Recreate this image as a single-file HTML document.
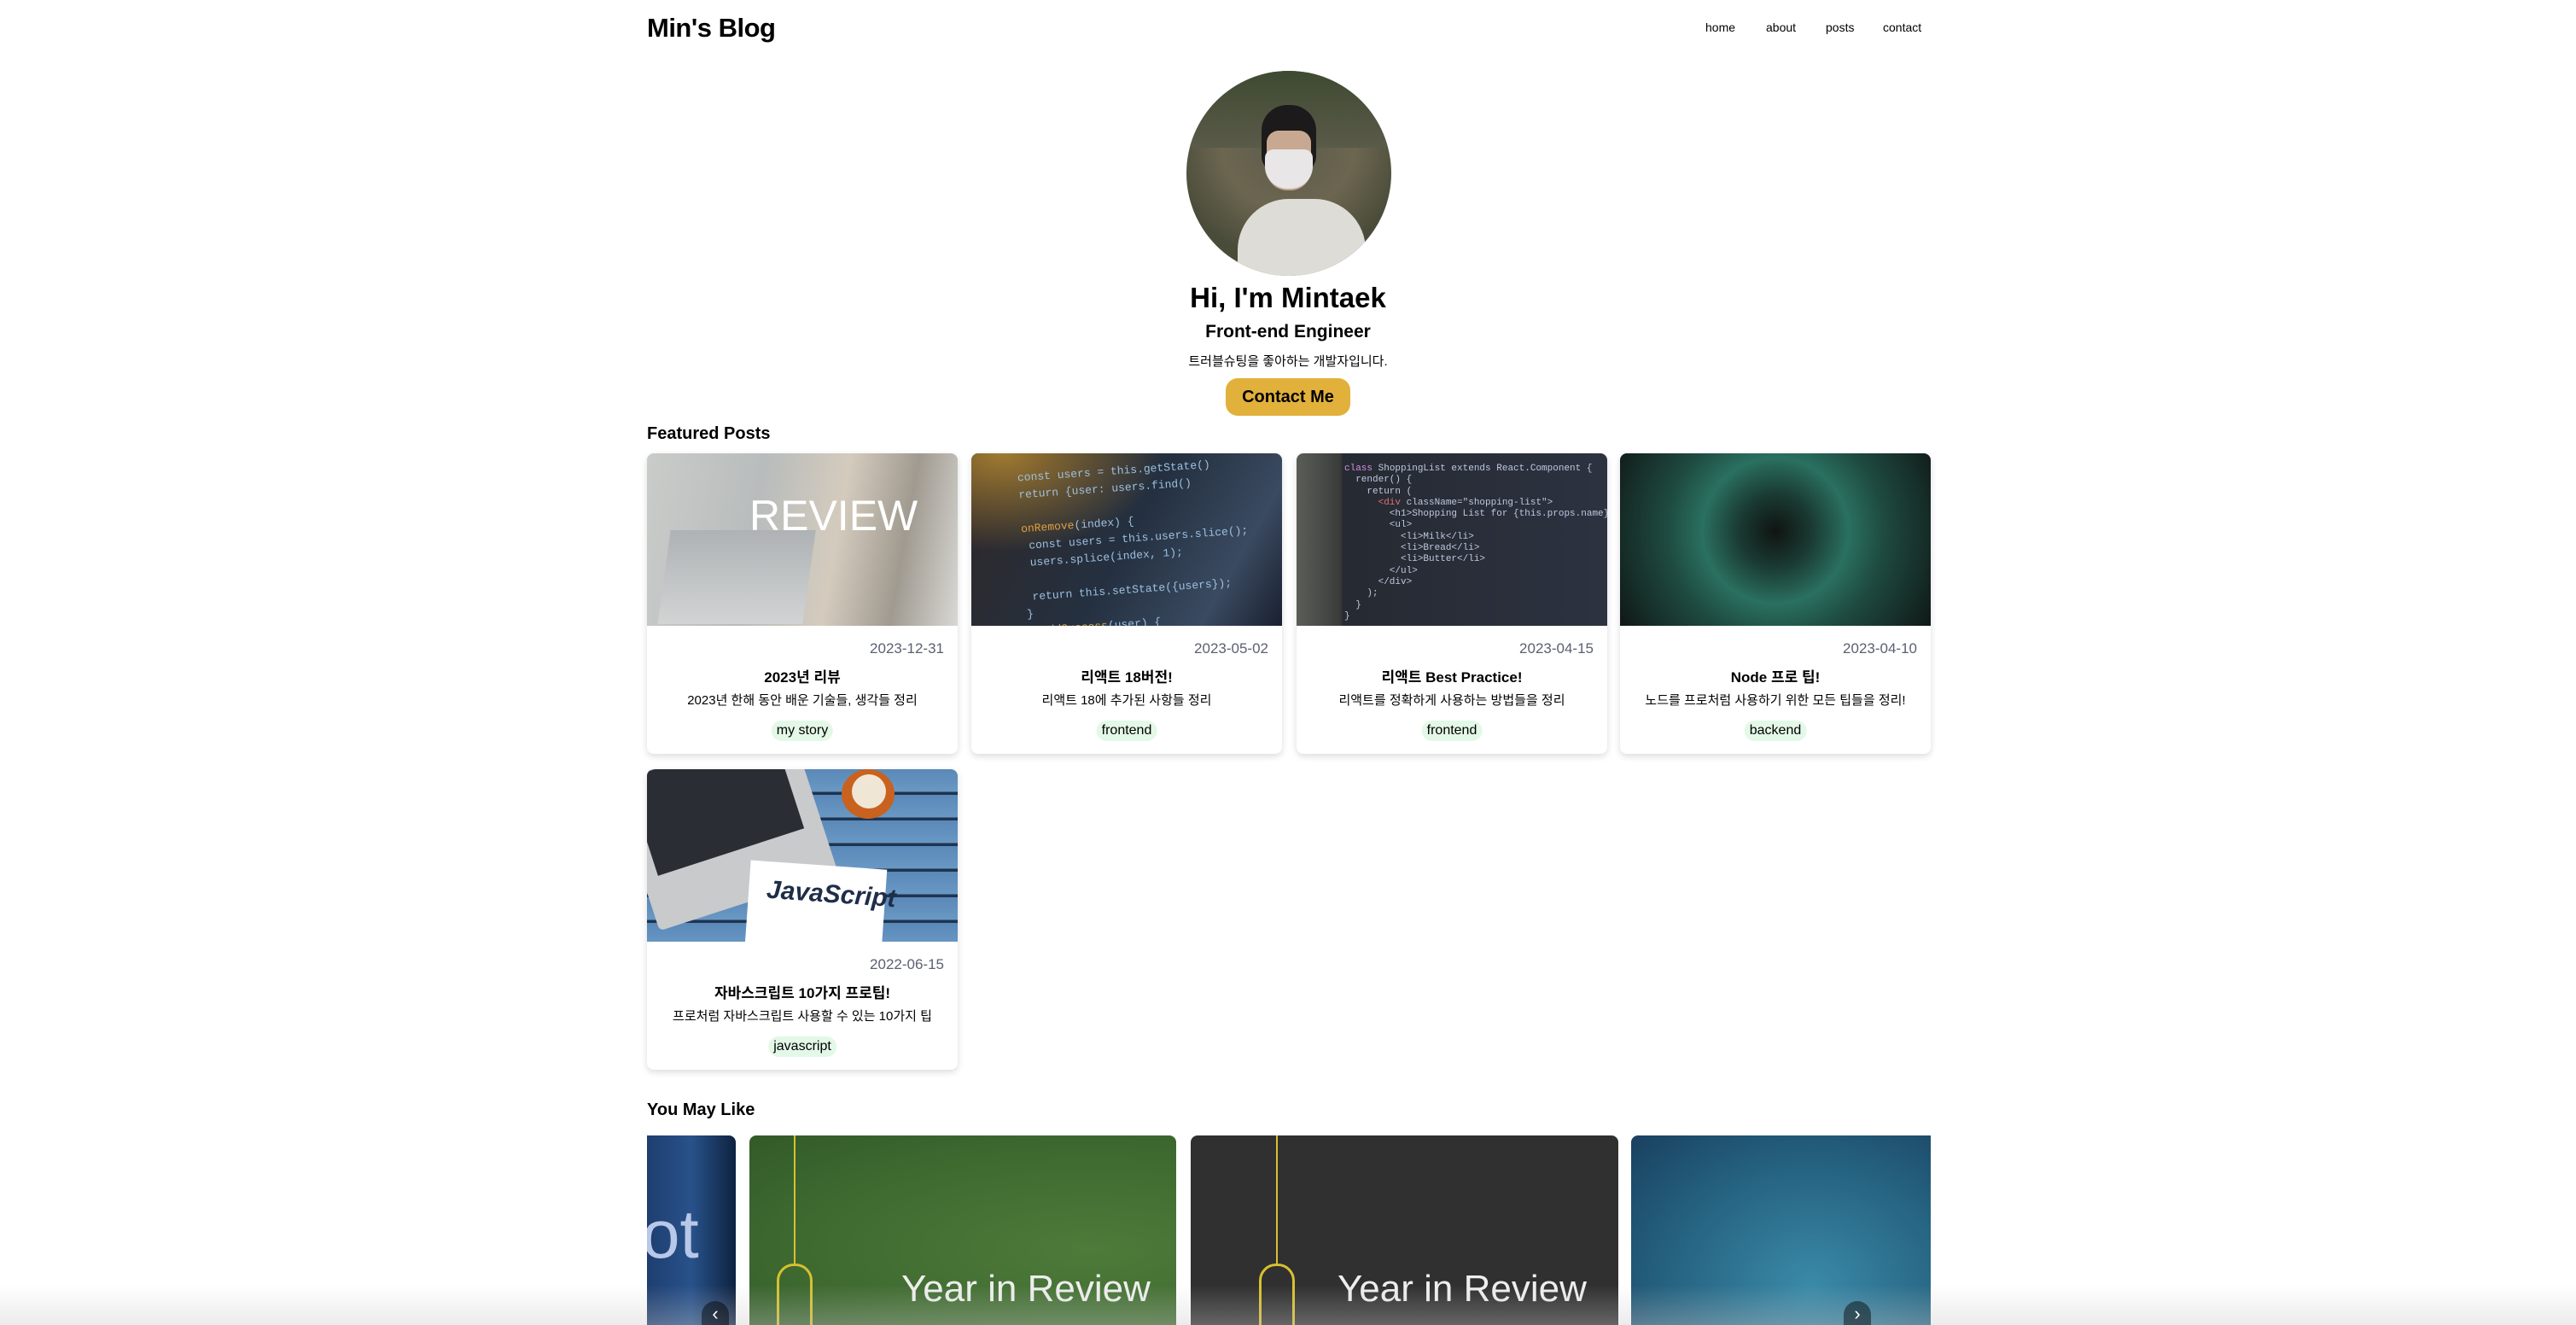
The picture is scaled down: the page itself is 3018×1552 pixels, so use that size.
<!DOCTYPE html>
<html><head><meta charset="utf-8"><style>
*{box-sizing:border-box;margin:0;padding:0}
html,body{width:3018px;height:1552px;overflow:hidden;background:#fff;font-family:"Liberation Sans","Noto Sans CJK KR",sans-serif;color:#000;position:relative}
.abs{position:absolute}
.logo{left:758px;top:15px;font-size:31px;font-weight:bold;letter-spacing:-0.5px}
.nav{top:24px;font-size:14px}
.avatar{left:1390px;top:83px;width:240px;height:240px;border-radius:50%;overflow:hidden;background:radial-gradient(circle at 50% 35%,#5a5a4c 0,#6c6650 40%,#4a4c3a 70%)}
.c{left:0;width:3018px;text-align:center}
.btn{left:1436px;top:443px;width:146px;height:44px;border-radius:14px;background:#e2b13c;font-weight:bold;font-size:20px;text-align:center;line-height:44px}
.h2{font-size:20px;font-weight:bold;left:758px}
.card{width:364px;height:352px;border-radius:8px;background:#fff;box-shadow:0 3px 8px rgba(0,0,0,.14);overflow:hidden}
.card .img{height:202px;position:relative;overflow:hidden}
.date{position:absolute;right:16px;top:219px;font-size:17px;color:#5c6070}
.t{position:absolute;left:0;right:0;top:248px;text-align:center;font-weight:bold;font-size:17px}
.d{position:absolute;left:0;right:0;top:278px;text-align:center;font-size:15px}
.tag{position:absolute;left:50%;transform:translateX(-50%);top:313px;height:24px;line-height:24px;padding:0 6px;border-radius:12px;background:#e3f8e7;font-size:16px}
.ci{top:1330px;height:222px;border-radius:8px 8px 0 0;overflow:hidden}
</style></head><body>
<div class="abs logo">Min's Blog</div>
<div class="abs nav" style="left:1998px">home</div>
<div class="abs nav" style="left:2069px">about</div>
<div class="abs nav" style="left:2139px">posts</div>
<div class="abs nav" style="left:2206px">contact</div>

<div class="abs avatar">
 <div class="abs" style="left:0;top:0;width:240px;height:90px;background:linear-gradient(#3e4a32,#5a5a48)"></div>
 <div class="abs" style="left:60px;top:150px;width:150px;height:110px;border-radius:60px 60px 0 0;background:#dedcd6"></div>
 <div class="abs" style="left:88px;top:40px;width:64px;height:80px;border-radius:30px 30px 20px 20px;background:#1c1a1a"></div>
 <div class="abs" style="left:94px;top:70px;width:52px;height:70px;border-radius:14px 14px 24px 24px;background:#c8a890"></div>
 <div class="abs" style="left:92px;top:92px;width:56px;height:46px;border-radius:10px 10px 26px 26px;background:#e8e6e6"></div>
</div>
<div class="abs c" style="top:330px;font-size:33px;font-weight:bold">Hi, I'm Mintaek</div>
<div class="abs c" style="top:377px;font-size:21px;font-weight:600">Front-end Engineer</div>
<div class="abs c" style="top:412px;font-size:15px">트러블슈팅을 좋아하는 개발자입니다.</div>
<div class="abs btn">Contact Me</div>

<div class="abs h2" style="top:497px">Featured Posts</div>

<div class="abs card" style="left:758px;top:531px">
 <div class="img" style="background:linear-gradient(100deg,#c9ccc9 0%,#b8bcbc 35%,#d4cbbd 60%,#a09a90 80%,#d8d8d4 100%)">
  <div class="abs" style="left:20px;top:90px;width:170px;height:110px;background:linear-gradient(#aeb2b4,#d2d4d4);transform:skewX(-8deg)"></div>
  <div class="abs" style="left:120px;top:44px;font-size:50px;color:#fff;font-family:'Liberation Sans Narrow','Liberation Sans',sans-serif">REVIEW</div>
 </div>
 <div class="date">2023-12-31</div><div class="t">2023년 리뷰</div><div class="d">2023년 한해 동안 배운 기술들, 생각들 정리</div><div class="tag">my story</div>
</div>
<div class="abs card" style="left:1138px;top:531px">
 <div class="img" style="background:radial-gradient(ellipse at 10% 0%,#a07a30,transparent 40%),linear-gradient(120deg,#302828,#243040 50%,#3a4a60 80%,#1a2030)">
  <div class="abs" style="left:60px;top:10px;font:13px 'Liberation Mono',monospace;color:#9cc0e0;line-height:20px;transform:rotate(-4deg)">const users = this.getState()<br>return {user: users.find()<br><br><span style="color:#e0a040">onRemove</span>(index) {<br>&nbsp;const users = this.users.slice();<br>&nbsp;users.splice(index, 1);<br><br>&nbsp;return this.setState({users});<br>}<br><span style="color:#e0a040">onAddSuccess</span>(user) {</div>
 </div>
 <div class="date">2023-05-02</div><div class="t">리액트 18버전!</div><div class="d">리액트 18에 추가된 사항들 정리</div><div class="tag">frontend</div>
</div>
<div class="abs card" style="left:1519px;top:531px">
 <div class="img" style="background:linear-gradient(90deg,#5a5e58 0,#3a3c3a 14%,#262a32 15%,#2c3240 100%)">
  <div class="abs" style="left:56px;top:12px;font:11px 'Liberation Mono',monospace;color:#c0c8e0;line-height:13.3px;white-space:pre"><span style="color:#d090e0">class</span> ShoppingList extends React.Component {
  render() {
    return (
      <span style="color:#e07070">&lt;div</span> className="shopping-list"&gt;
        &lt;h1&gt;Shopping List for {this.props.name}
        &lt;ul&gt;
          &lt;li&gt;Milk&lt;/li&gt;
          &lt;li&gt;Bread&lt;/li&gt;
          &lt;li&gt;Butter&lt;/li&gt;
        &lt;/ul&gt;
      &lt;/div&gt;
    );
  }
}</div>
 </div>
 <div class="date">2023-04-15</div><div class="t">리액트 Best Practice!</div><div class="d">리액트를 정확하게 사용하는 방법들을 정리</div><div class="tag">frontend</div>
</div>
<div class="abs card" style="left:1898px;top:531px">
 <div class="img" style="background:radial-gradient(circle at 50% 45%,#101412 0,#1a3a32 20%,#2a7060 40%,#1e4a40 60%,#101816 100%)"></div>
 <div class="date">2023-04-10</div><div class="t">Node 프로 팁!</div><div class="d">노드를 프로처럼 사용하기 위한 모든 팁들을 정리!</div><div class="tag">backend</div>
</div>
<div class="abs card" style="left:758px;top:901px">
 <div class="img" style="background:repeating-linear-gradient(180deg,#5a88b8 0,#6a98c4 26px,#1e3450 27px,#1e3450 30px)">
  <div class="abs" style="left:-20px;top:-30px;width:220px;height:190px;background:#c8cacc;transform:rotate(-18deg);border-radius:6px"></div>
  <div class="abs" style="left:-10px;top:-20px;width:180px;height:120px;background:#2a2e34;transform:rotate(-18deg)"></div>
  <div class="abs" style="left:118px;top:112px;width:160px;height:100px;background:#fff;transform:rotate(4deg)"></div>
  <div class="abs" style="left:140px;top:130px;font-size:30px;font-weight:bold;color:#1e2e48;transform:rotate(4deg);font-style:italic">JavaScript</div>
  <div class="abs" style="left:228px;top:0;width:62px;height:58px;border-radius:50%;background:#c8621e"></div>
  <div class="abs" style="left:240px;top:6px;width:40px;height:40px;border-radius:50%;background:#f0e6d6"></div>
 </div>
 <div class="date">2022-06-15</div><div class="t">자바스크립트 10가지 프로팁!</div><div class="d">프로처럼 자바스크립트 사용할 수 있는 10가지 팁</div><div class="tag">javascript</div>
</div>

<div class="abs h2" style="top:1289px">You May Like</div>
<div class="abs ci" style="left:758px;width:104px;border-radius:0 8px 0 0;background:linear-gradient(90deg,#1e3e70,#28528a 50%,#0e2240)"><div class="abs" style="left:-6px;top:70px;font-size:80px;color:#b8c8e8">ot</div></div>
<div class="abs ci" style="left:878px;width:500px;background:radial-gradient(ellipse at 80% 60%,#4e7a3a,#3e6a30 60%,#325a28)">
 <div class="abs" style="left:52px;top:0;width:2px;height:150px;background:#d8c030"></div>
 <div class="abs" style="left:32px;top:150px;width:42px;height:80px;border:3px solid #d8c030;border-radius:20px 20px 0 0"></div>
 <div class="abs" style="left:178px;top:155px;font-size:44px;color:#eee;font-family:'Liberation Sans Narrow','Liberation Sans',sans-serif">Year in Review</div>
</div>
<div class="abs ci" style="left:1395px;width:501px;background:#303030">
 <div class="abs" style="left:100px;top:0;width:2px;height:150px;background:#d8c030"></div>
 <div class="abs" style="left:80px;top:150px;width:42px;height:80px;border:3px solid #d8c030;border-radius:20px 20px 0 0"></div>
 <div class="abs" style="left:172px;top:155px;font-size:44px;color:#eee;font-family:'Liberation Sans Narrow','Liberation Sans',sans-serif">Year in Review</div>
</div>
<div class="abs ci" style="left:1911px;width:351px;border-radius:8px 0 0 0;background:radial-gradient(ellipse at 60% 80%,#3a8aa8,#24607e 60%,#1a4060)"></div>
<div class="abs" style="left:0;top:1505px;width:3018px;height:47px;background:linear-gradient(rgba(255,255,255,0),rgba(200,200,200,.35))"></div>
<div class="abs" style="left:822px;top:1524px;width:32px;height:28px;border-radius:16px 16px 0 0;background:rgba(0,0,0,.45);color:#fff;font-size:22px;text-align:center;line-height:30px;overflow:hidden">‹</div>
<div class="abs" style="left:2160px;top:1524px;width:32px;height:28px;border-radius:16px 16px 0 0;background:rgba(0,0,0,.45);color:#fff;font-size:22px;text-align:center;line-height:30px;overflow:hidden">›</div>
</body></html>
